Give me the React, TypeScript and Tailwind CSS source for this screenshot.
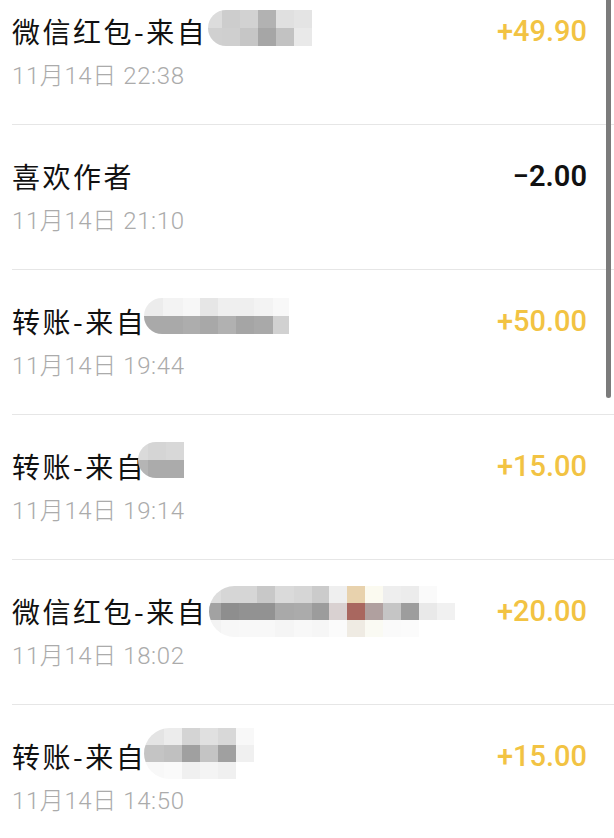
import React from 'react';

interface Mosaic {
  widths: number[];
  rows: string[][];
  cellH: number;
  className: string;
}

interface Bill {
  id: number;
  title: string;
  time: string;
  amount: string;
  income: boolean;
  mosaic?: Mosaic;
}

const bills: Bill[] = [
  {
    id: 1,
    title: '微信红包-来自',
    time: '11月14日 22:38',
    amount: '+49.90',
    income: true,
    mosaic: {
      widths: [14, 18, 18, 18, 18, 18],
      cellH: 18,
      className: 'ml-[1px] -mt-[6px]',
      rows: [
        ['#dcdcdc', '#cdcdcd', '#d2d2d2', '#b2b2b2', '#e0e0e0', '#e4e4e4'],
        ['#d0d0d0', '#cfcfcf', '#c6c6c6', '#a6a6a6', '#c2c2c2', '#e9e9e9'],
      ],
    },
  },
  { id: 2, title: '喜欢作者', time: '11月14日 21:10', amount: '−2.00', income: false },
  {
    id: 3,
    title: '转账-来自',
    time: '11月14日 19:44',
    amount: '+50.00',
    income: true,
    mosaic: {
      widths: [19, 20, 17, 18, 18, 18, 19, 16],
      cellH: 18,
      className: '-ml-[2px] -mt-[10px]',
      rows: [
        ['#ececec', '#f3f3f3', '#f7f7f7', '#e6e6e6', '#efefef', '#efefef', '#f3f3f3', '#f8f8f8'],
        ['#a9a9a9', '#a9a9a9', '#adadad', '#a8a8a8', '#b1b1b1', '#a5a5a5', '#a9a9a9', '#d1d1d1'],
      ],
    },
  },
  {
    id: 4,
    title: '转账-来自',
    time: '11月14日 19:14',
    amount: '+15.00',
    income: true,
    mosaic: {
      widths: [10, 18, 18],
      cellH: 18,
      className: '-ml-[8px] -mt-[12px]',
      rows: [
        ['#dadada', '#d5d5d5', '#d8d8d8'],
        ['#b5b5b5', '#ababab', '#ababab'],
      ],
    },
  },
  {
    id: 5,
    title: '微信红包-来自',
    time: '11月14日 18:02',
    amount: '+20.00',
    income: true,
    mosaic: {
      widths: [12, 18, 18, 18, 19, 18, 17, 18, 18, 18, 18, 18, 18, 18],
      cellH: 17,
      className: 'ml-[2px]',
      rows: [
        ['#dddddd', '#d6d6d6', '#d6d6d6', '#c8c8c8', '#dadada', '#d6d6d6', '#cbcbcb', '#efefef', '#e8d2ad', '#fbfaf0', '#eeeeee', '#ececec', '#fafafa', '#ffffff'],
        ['#a2a2a2', '#8e8e8e', '#929292', '#929292', '#a9a9a9', '#ababab', '#9c9c9c', '#d9d1d1', '#a9675f', '#b0a09f', '#c5c5c5', '#9d9d9d', '#e9e9e9', '#f1f1f1'],
        ['#f3f3f3', '#f7f7f7', '#f8f8f8', '#f8f8f8', '#f5f5f5', '#f8f8f8', '#f6f6f6', '#fbfbfb', '#efebe3', '#fafaf3', '#fafafa', '#fbfbfb', '#ffffff', '#ffffff'],
      ],
    },
  },
  {
    id: 6,
    title: '转账-来自',
    time: '11月14日 14:50',
    amount: '+15.00',
    income: true,
    mosaic: {
      widths: [20, 18, 18, 18, 18, 18],
      cellH: 17,
      className: '-ml-[2px] -mt-[6px]',
      rows: [
        ['#e4e4e4', '#ececec', '#d4d4d4', '#e0e0e0', '#d8d8d8', '#f8f8f8'],
        ['#c4c4c4', '#c0c0c0', '#a0a0a0', '#c4c4c4', '#a0a0a0', '#f0f0f0'],
        ['#f8f8f8', '#fafafa', '#f0f0f0', '#f4f4f4', '#f0f0f0', '#ffffff'],
      ],
    },
  },
];

const MosaicBlock: React.FC<{ mosaic: Mosaic }> = ({ mosaic }) => (
  <div className={`flex shrink-0 flex-col overflow-hidden rounded-l-full ${mosaic.className}`}>
    {mosaic.rows.map((row, r) => (
      <div key={r} className="flex">
        {row.map((color, c) => (
          <div key={c} style={{ width: mosaic.widths[c], height: mosaic.cellH, backgroundColor: color }} />
        ))}
      </div>
    ))}
  </div>
);

export default function App() {
  return (
    <div className="relative h-[838px] w-[614px] overflow-hidden bg-white font-['Noto_Sans_CJK_SC',sans-serif]">
      <ul className="-mt-5">
        {bills.map(bill => (
          <li key={bill.id} className="ml-3 h-[145px] border-b border-[#e6e6e6] pt-[33px]">
            <div className="flex h-9 items-center justify-between pr-[27px]">
              <div className="flex h-9 items-center">
                <span className="text-[28px] leading-9 tracking-[2.5px] text-[#111]">{bill.title}</span>
                {bill.mosaic && <MosaicBlock mosaic={bill.mosaic} />}
              </div>
              <span
                className={`font-['Roboto',sans-serif] text-[29px] leading-9 ${bill.income ? 'font-medium text-[#f2c343]' : 'font-semibold text-[#111]'}`}
              >
                {bill.amount}
              </span>
            </div>
            <p className="mt-3 font-['Roboto','Noto_Sans_CJK_SC',sans-serif] text-[24px] font-light leading-[30px] tracking-[0.6px] text-[#ababab]">
              {bill.time}
            </p>
          </li>
        ))}
      </ul>
      <div className="absolute right-[3px] top-0 h-[398px] w-[5px] rounded-b-full bg-[#7b7b7b]" />
    </div>
  );
}
